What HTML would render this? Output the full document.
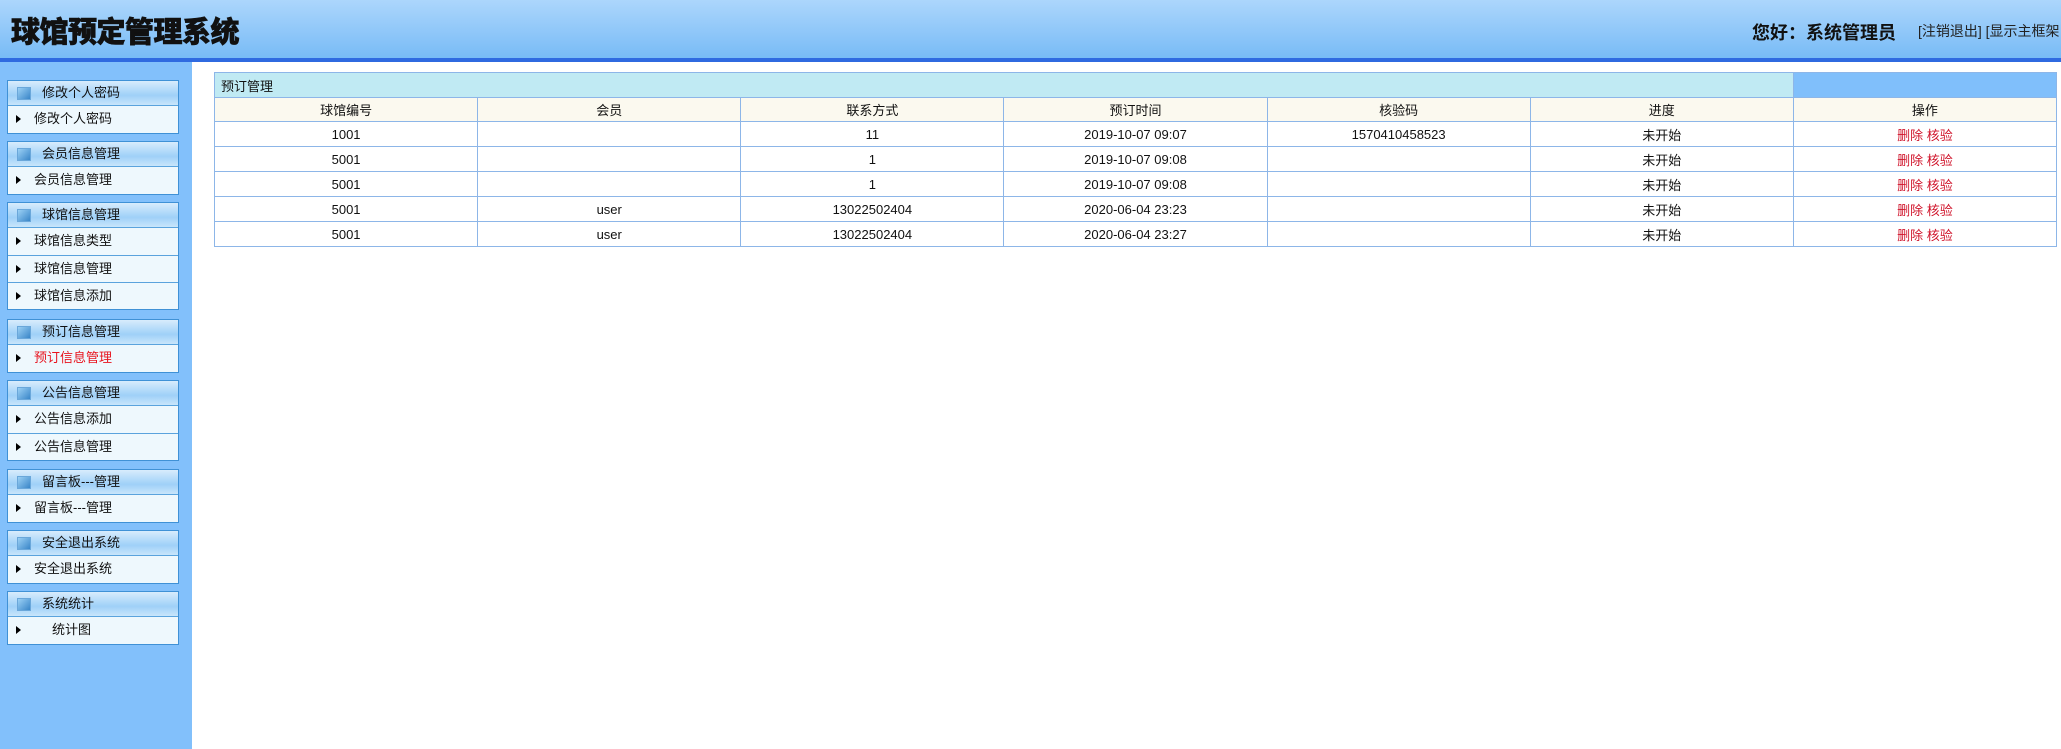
<!DOCTYPE html>
<html><head><meta charset="utf-8"><style>
*{margin:0;padding:0;box-sizing:border-box}
body{width:2061px;height:749px;overflow:hidden;font-family:"Liberation Sans","Noto Sans CJK SC",sans-serif;background:#fff;position:relative}
#hd{position:absolute;left:0;top:0;width:2061px;height:58px;background:linear-gradient(#acd6fc,#78bbf6);}
#hd .t{position:absolute;left:11px;top:9px;font-size:29px;font-weight:900;color:#111;letter-spacing:-0.5px;-webkit-text-stroke:0.6px #111}
#hd .u{position:absolute;left:1752px;top:19px;font-size:18px;font-weight:bold;color:#111}
#hd .l{position:absolute;left:1918px;top:21px;font-size:14px;color:#222;white-space:nowrap}
#bar{position:absolute;left:0;top:58px;width:2061px;height:4px;background:#2f6ae0}
#sd{position:absolute;left:0;top:62px;width:192px;height:687px;background:#82c0fb}
.g{position:absolute;left:7px;width:172px;border:1px solid #3f91d6;background:#eef8fd}
.g .h{height:25px;border-bottom:1px solid #5aa3dd;background:linear-gradient(#d8ecfc,#9fd0f8 60%,#c8e6fb);font-size:13px;line-height:24px;padding-left:34px;position:relative;color:#111}
.g .h:before{content:"";position:absolute;left:9px;top:6px;width:12px;height:11px;background:linear-gradient(135deg,#9bd0f5,#3a86c8);border:1px solid #6aa7da}
.g .i{height:27px;border-top:1px solid #5aa3dd;font-size:13px;line-height:26px;padding-left:26px;position:relative;color:#111}
.g .h+.i{border-top:none}
.g .i:before{content:"";position:absolute;left:8px;top:9px;border-left:5px solid #000;border-top:4px solid transparent;border-bottom:4px solid transparent}
table{position:absolute;left:214px;top:72px;width:1843px;border-collapse:collapse;font-size:13px;color:#111}
td{border:1px solid #8db6e8;height:25px;text-align:center;width:263px;padding:0}
tr.tt td{background:#c0eaf3;text-align:left;padding-left:6px}
tr.tt td.b{background:#80bffb}
tr.hh td{background:#fbf9ef;height:24px}
.r{color:#d0132a}
</style></head><body>
<div id="hd"><div class="t">球馆预定管理系统</div><div class="u">您好：系统管理员</div><div class="l">[注销退出] [显示主框架</div></div>
<div id="bar"></div>
<div id="sd"></div>
<div class="g" style="top:80px"><div class="h">修改个人密码</div><div class="i">修改个人密码</div></div>
<div class="g" style="top:141px"><div class="h">会员信息管理</div><div class="i">会员信息管理</div></div>
<div class="g" style="top:202px"><div class="h">球馆信息管理</div><div class="i">球馆信息类型</div><div class="i">球馆信息管理</div><div class="i">球馆信息添加</div></div>
<div class="g" style="top:319px"><div class="h">预订信息管理</div><div class="i" style="color:#e8141e">预订信息管理</div></div>
<div class="g" style="top:380px"><div class="h">公告信息管理</div><div class="i">公告信息添加</div><div class="i">公告信息管理</div></div>
<div class="g" style="top:469px"><div class="h">留言板---管理</div><div class="i">留言板---管理</div></div>
<div class="g" style="top:530px"><div class="h">安全退出系统</div><div class="i">安全退出系统</div></div>
<div class="g" style="top:591px"><div class="h">系统统计</div><div class="i" style="padding-left:44px">统计图</div></div>
<table>
<tr class="tt"><td colspan="6">预订管理</td><td class="b"></td></tr>
<tr class="hh"><td>球馆编号</td><td>会员</td><td>联系方式</td><td>预订时间</td><td>核验码</td><td>进度</td><td>操作</td></tr>
<tr><td>1001</td><td></td><td>11</td><td>2019-10-07 09:07</td><td>1570410458523</td><td>未开始</td><td class="r">删除 核验</td></tr>
<tr><td>5001</td><td></td><td>1</td><td>2019-10-07 09:08</td><td></td><td>未开始</td><td class="r">删除 核验</td></tr>
<tr><td>5001</td><td></td><td>1</td><td>2019-10-07 09:08</td><td></td><td>未开始</td><td class="r">删除 核验</td></tr>
<tr><td>5001</td><td>user</td><td>13022502404</td><td>2020-06-04 23:23</td><td></td><td>未开始</td><td class="r">删除 核验</td></tr>
<tr><td>5001</td><td>user</td><td>13022502404</td><td>2020-06-04 23:27</td><td></td><td>未开始</td><td class="r">删除 核验</td></tr>
</table>
</body></html>
